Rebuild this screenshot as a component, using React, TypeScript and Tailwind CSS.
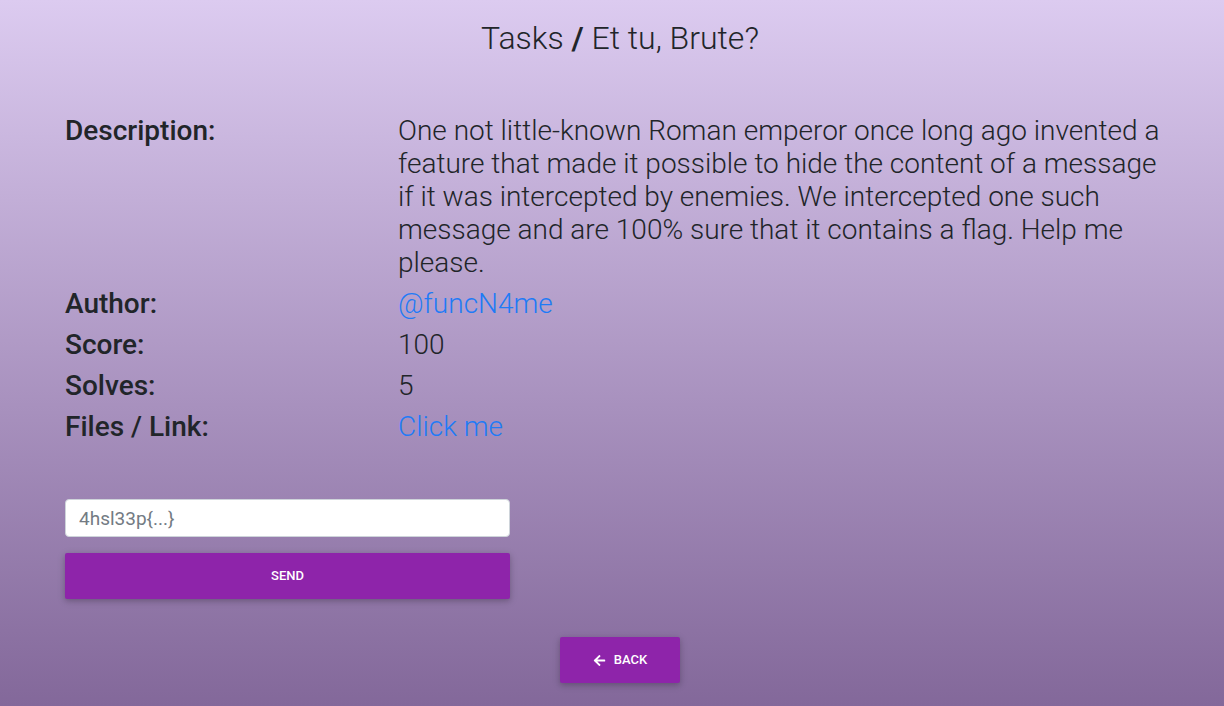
import { FaArrowLeft } from "react-icons/fa";

const rows = [
  { label: "Author:", value: "@funcN4me", link: true },
  { label: "Score:", value: "100" },
  { label: "Solves:", value: "5" },
  { label: "Files / Link:", value: "Click me", link: true },
];

export default function App() {
  return (
    <div className="min-h-[706px] bg-gradient-to-b from-[#dccbf0] to-[#83689a] font-['Roboto',sans-serif] text-[#212529] pl-[16px]">
      <h1 className="pt-[18px] text-center text-[32px] leading-[40px] font-light">
        Tasks <span className="font-semibold">/</span> Et tu, Brute?
      </h1>

      <div className="mt-[56px] ml-[49px] w-[1100px]">
        <div className="flex mb-[8px]">
          <div className="w-[333px] shrink-0 text-[28px] leading-[33px] font-medium">Description:</div>
          <div className="w-[770px] text-[28px] leading-[33px] font-light">
            One not little-known Roman emperor once long ago invented a feature that made it possible to hide the
            content of a message if it was intercepted by enemies. We intercepted one such message and are 100% sure
            that it contains a flag. Help me please.
          </div>
        </div>
        {rows.map((r) => (
          <div key={r.label} className="flex mb-[8px]">
            <div className="w-[333px] shrink-0 text-[28px] leading-[33px] font-medium">{r.label}</div>
            <div
              className={
                r.link
                  ? "text-[28px] leading-[33px] font-light text-[#1f7bf6]"
                  : "text-[28px] leading-[33px] font-light"
              }
            >
              {r.value}
            </div>
          </div>
        ))}

        <div className="mt-[56px] w-[445px]">
          <input
            placeholder="4hsl33p{...}"
            className="block w-full h-[38px] rounded-[4px] border border-[#ced4da] bg-white px-[13px] text-[19px] text-[#495057] placeholder:text-[#737b83] outline-none"
          />
          <button className="mt-[16px] w-full h-[46px] rounded-[2px] bg-[#8e24aa] text-white text-[13px] font-medium shadow-[0_2px_5px_0_rgba(0,0,0,0.16),0_2px_10px_0_rgba(0,0,0,0.12)]">
            SEND
          </button>
        </div>
      </div>

      <div className="flex justify-center mt-[38px] pb-[23px]">
        <button className="flex items-center justify-center gap-[8px] w-[120px] h-[46px] rounded-[2px] bg-[#8e24aa] text-white text-[13px] font-medium shadow-[0_2px_5px_0_rgba(0,0,0,0.16),0_2px_10px_0_rgba(0,0,0,0.12)]">
          <FaArrowLeft className="text-[13px]" />
          BACK
        </button>
      </div>
    </div>
  );
}
